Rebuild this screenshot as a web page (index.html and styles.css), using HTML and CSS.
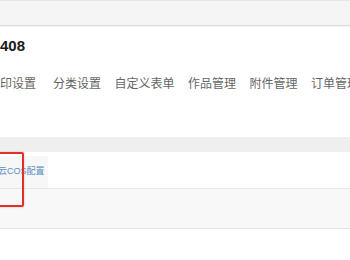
FILE: index.html
```html
<!DOCTYPE html>
<html lang="zh-CN">
<head>
    <meta charset="UTF-8">
    <meta name="viewport" content="width=device-width, initial-scale=1.0">
    <title>设置</title>
    <link rel="stylesheet" href="styles.css">
</head>
<body>
    <div class="topbar"></div>

    <div class="page">
        <h1 class="title">408</h1>

        <div class="nav">
            <a class="first">打印设置</a>
            <a>分类设置</a>
            <a>自定义表单</a>
            <a>作品管理</a>
            <a>附件管理</a>
            <a>订单管理</a>
        </div>
    </div>

    <div class="band"></div>

    <div class="subtabs">
        <a class="subtab">腾讯云COS配置</a>
        <div class="mark"></div>
    </div>

    <div class="panel"></div>
</body>
</html>
```

FILE: styles.css
```css
body {
    margin: 0;
    font-family: "Liberation Sans", Arial, "Noto Sans CJK SC", sans-serif;
    background-color: #fff;
    overflow: hidden;
}
.topbar {
    height: 24px;
    background-color: #f5f5f5;
    border-top: 1px solid #e6e6e6;
    border-bottom: 1px solid #dcdcdc;
    box-shadow: 0 1px 1px rgba(0, 0, 0, 0.04);
}
.page {
    padding-top: 10px;
}
.title {
    margin: 0;
    font-size: 15px;
    line-height: 20px;
    font-weight: bold;
    color: #1a1a1a;
}
.nav {
    display: flex;
    gap: 13.5px;
    margin-top: 20px;
    margin-left: -12px;
    white-space: nowrap;
}
.nav a {
    font-size: 12px;
    line-height: 16px;
    color: #666;
}
.nav a.first {
    margin-right: 3.5px;
}
.band {
    height: 15px;
    margin-top: 45px;
    background-color: #efefef;
}
.subtabs {
    position: relative;
    height: 36px;
    border-bottom: 1px solid #e6e6e6;
}
.subtab {
    display: inline-block;
    margin-top: 4px;
    margin-left: -20px;
    padding: 0 3px 0 0;
    height: 32px;
    line-height: 31px;
    font-size: 9px;
    color: #5a8cbf;
    background-color: #f7f7f7;
    white-space: nowrap;
}
.mark {
    position: absolute;
    left: -10px;
    top: 0;
    width: 30px;
    height: 51px;
    border: 2px solid #e0302a;
    border-radius: 2px;
    box-shadow: 0 0 2px rgba(224, 48, 42, 0.4);
}
.panel {
    height: 39px;
    background-color: #f8f8f8;
    border-bottom: 1px solid #e4e4e4;
}
```
